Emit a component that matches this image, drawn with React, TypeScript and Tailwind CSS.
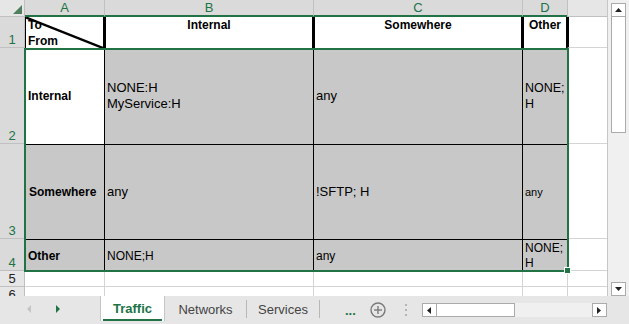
import React from "react";

const hdrSel = "bg-[#dadada] text-[#217346]";
const hdrUn = "bg-[#e6e6e6] text-[#222]";

function RowHdr({ n, sel }: { n: string; sel: boolean }) {
  return (
    <div
      className={`${sel ? hdrSel : hdrUn} border-b border-r border-[#c0c0c0] flex items-end justify-center text-[13px] leading-[14px] overflow-hidden`}
    >
      {n}
    </div>
  );
}

function ColHdr({ l, first }: { l: string; first?: boolean }) {
  return (
    <div
      className={`${hdrSel} ${first ? "" : "border-l border-l-[#c0c0c0]"} border-b-2 border-b-[#217346] flex items-center justify-center text-[13px] leading-[15px]`}
    >
      {l}
    </div>
  );
}

export default function App() {
  return (
    <div className="w-[629px] h-[324px] overflow-hidden bg-white flex flex-col font-['Liberation_Sans',Arial,sans-serif] text-black">
      <div className="flex h-[296px]">
        <div className="relative w-[607px] h-[296px] grid grid-cols-[25px_79px_209px_209px_45px_40px] grid-rows-[17px_31px_96px_95px_32px_16px_9px]">
          {/* header row */}
          <div className="bg-[#e6e6e6] border-r border-b border-[#c0c0c0] relative">
            <svg className="absolute left-0 top-0" width="25" height="17" viewBox="0 0 25 17">
              <polygon points="13,14 22,14 22,5" fill="#4f7f5c" />
            </svg>
          </div>
          <ColHdr l="A" first />
          <ColHdr l="B" />
          <ColHdr l="C" />
          <ColHdr l="D" />
          <div className="bg-[#e6e6e6] border-l border-b border-[#c0c0c0]" />

          {/* row 1 */}
          <RowHdr n="1" sel />
          <div className="relative bg-white border-l border-r border-black text-[12px] font-bold leading-[16px] pl-[2px]">
            <svg className="absolute left-0 top-0" width="77" height="31" viewBox="0 0 77 31">
              <line x1="0" y1="0.5" x2="77" y2="31" stroke="#000" strokeWidth="2.4" />
            </svg>
            <div>To</div>
            <div>From</div>
          </div>
          <div className="bg-white border-l-2 border-r border-black text-[12px] font-bold leading-[16px] text-center">
            Internal
          </div>
          <div className="bg-white border-l-2 border-r border-black text-[12px] font-bold leading-[16px] text-center">
            Somewhere
          </div>
          <div className="bg-white border-l-2 border-r border-black text-[12px] font-bold leading-[16px] text-center">
            Other
          </div>
          <div className="bg-white border-l-2 border-l-black border-b border-b-[#d4d4d4]" />

          {/* row 2 */}
          <RowHdr n="2" sel />
          <div className="bg-white border-l border-black flex items-center pl-[2px] text-[12px] font-bold">
            Internal
          </div>
          <div className="bg-[#c8c8c8] border-l border-black flex flex-col justify-center pl-[2px] text-[13px] leading-[16px]">
            <div>NONE:H</div>
            <div>MyService:H</div>
          </div>
          <div className="bg-[#c8c8c8] border-l border-black flex items-center pl-[2px] text-[13px]">
            any
          </div>
          <div className="bg-[#c8c8c8] border-l border-black flex flex-col justify-center pl-[2px] text-[12.5px] leading-[16px]">
            <div>NONE;</div>
            <div>H</div>
          </div>
          <div className="bg-white border-b border-[#d4d4d4]" />

          {/* row 3 */}
          <RowHdr n="3" sel />
          <div className="bg-[#c8c8c8] border-l border-t border-black flex items-center pl-[3px] text-[12px] font-bold">
            Somewhere
          </div>
          <div className="bg-[#c8c8c8] border-l border-t border-black flex items-center pl-[2px] text-[13px]">
            any
          </div>
          <div className="bg-[#c8c8c8] border-l border-t border-black flex items-center pl-[2px] text-[13px]">
            !SFTP; H
          </div>
          <div className="bg-[#c8c8c8] border-l border-t border-black flex items-center pl-[2px] text-[11px]">
            any
          </div>
          <div className="bg-white border-b border-[#d4d4d4]" />

          {/* row 4 */}
          <RowHdr n="4" sel />
          <div className="bg-[#c8c8c8] border-l border-t border-black flex items-center pl-[2px] text-[12px] font-bold">
            Other
          </div>
          <div className="bg-[#c8c8c8] border-l border-t border-black flex items-center pl-[2px] text-[12px]">
            NONE;H
          </div>
          <div className="bg-[#c8c8c8] border-l border-t border-black flex items-center pl-[2px] text-[12px]">
            any
          </div>
          <div className="bg-[#c8c8c8] border-l border-t border-black flex flex-col justify-center pl-[2px] text-[12px] leading-[15px]">
            <div>NONE;</div>
            <div>H</div>
          </div>
          <div className="bg-white border-b border-[#d4d4d4]" />

          {/* row 5 */}
          <RowHdr n="5" sel={false} />
          <div className="bg-white border-b border-[#d4d4d4]" />
          <div className="bg-white border-l border-b border-[#d4d4d4]" />
          <div className="bg-white border-l border-b border-[#d4d4d4]" />
          <div className="bg-white border-l border-b border-[#d4d4d4]" />
          <div className="bg-white border-l border-b border-[#d4d4d4]" />

          {/* row 6 */}
          <div className="bg-[#e6e6e6] text-[#222] border-r border-[#c0c0c0] flex items-start justify-center text-[13px] leading-[14px] overflow-hidden pt-[1px]">
            6
          </div>
          <div className="bg-white" />
          <div className="bg-white border-l border-[#d4d4d4]" />
          <div className="bg-white border-l border-[#d4d4d4]" />
          <div className="bg-white border-l border-[#d4d4d4]" />
          <div className="bg-white border-l border-[#d4d4d4]" />

          {/* selection overlay */}
          <div className="absolute left-[24px] top-[48px] w-[545px] h-[224px] border-2 border-[#217346] pointer-events-none" />
          <div className="absolute left-[564px] top-[267px] w-[7px] h-[7px] bg-[#217346] border border-white pointer-events-none" />
        </div>

        {/* vertical scrollbar */}
        <div className="w-[22px] h-[296px] bg-[#f0f0f0] border-l border-[#c6c6c6] flex flex-col pl-[3px] pr-[3px]">
          <div className="mt-[3px] h-[14px] w-[15px] bg-white border border-[#ababab] flex items-center justify-center">
            <svg width="7" height="4" viewBox="0 0 7 4">
              <polygon points="0,4 7,4 3.5,0" fill="#222" />
            </svg>
          </div>
          <div className="h-[116px] w-[15px] bg-white border border-[#ababab] border-t-0" />
          <div className="flex-1" />
          <div className="h-[14px] w-[15px] bg-white border border-[#ababab] flex items-center justify-center">
            <svg width="7" height="4" viewBox="0 0 7 4">
              <polygon points="0,0 7,0 3.5,4" fill="#222" />
            </svg>
          </div>
        </div>
      </div>

      {/* tab bar */}
      <div className="h-[28px] bg-[#e6e6e6] flex items-start font-['Liberation_Sans',Arial,sans-serif]">
        <div className="w-[100px] h-[28px] flex items-center">
          <svg width="100" height="28" viewBox="0 0 100 28">
            <polygon points="31,9 31,17 27,13" fill="#c4c4c4" />
            <polygon points="56,9 56,17 60,13" fill="#217346" />
          </svg>
        </div>
        <div className="w-[65px] h-[25px] bg-white border-l border-r border-[#c6c6c6] flex flex-col">
          <div className="flex-1 flex items-center justify-center text-[13px] font-bold text-[#217346] pt-[2px]">
            Traffic
          </div>
          <div className="h-[2px] mx-[2px] bg-[#217346]" />
        </div>
        <div className="w-[81px] h-[27px] flex items-center justify-center text-[13px] text-[#444]">
          Networks
        </div>
        <div className="w-px h-[18px] mt-[4px] bg-[#b8b8b8]" />
        <div className="w-[72px] h-[27px] flex items-center justify-center text-[13px] text-[#444]">
          Services
        </div>
        <div className="w-px h-[18px] mt-[4px] bg-[#b8b8b8]" />
        <div className="ml-[25px] h-[24px] flex items-center text-[13px] font-bold text-[#217346] leading-none pt-[4px]">
          ...
        </div>
        <div className="ml-[14px] h-[28px] flex items-center">
          <svg width="16" height="16" viewBox="0 0 16 16">
            <circle cx="8" cy="8" r="7" fill="none" stroke="#7a7a7a" strokeWidth="1.4" />
            <line x1="8" y1="4" x2="8" y2="12" stroke="#7a7a7a" strokeWidth="1.4" />
            <line x1="4" y1="8" x2="12" y2="8" stroke="#7a7a7a" strokeWidth="1.4" />
          </svg>
        </div>
        <div className="ml-[17px] h-[28px] flex items-center">
          <svg width="6" height="14" viewBox="0 0 6 14">
            <rect x="2" y="1" width="2" height="2" fill="#b4b4b4" />
            <rect x="2" y="6" width="2" height="2" fill="#b4b4b4" />
            <rect x="2" y="11" width="2" height="2" fill="#b4b4b4" />
          </svg>
        </div>
        <div className="ml-[13px] mt-[7px] flex h-[14px]">
          <div className="w-[15px] h-[14px] bg-white border border-[#ababab] flex items-center justify-center">
            <svg width="4" height="7" viewBox="0 0 4 7">
              <polygon points="4,0 4,7 0,3.5" fill="#222" />
            </svg>
          </div>
          <div className="w-[78px] h-[14px] bg-white border border-l-0 border-[#ababab]" />
          <div className="w-[77px] h-[14px] bg-[#f0f0f0]" />
          <div className="w-[15px] h-[14px] bg-white border border-[#ababab] flex items-center justify-center">
            <svg width="4" height="7" viewBox="0 0 4 7">
              <polygon points="0,0 0,7 4,3.5" fill="#222" />
            </svg>
          </div>
        </div>
      </div>
    </div>
  );
}
